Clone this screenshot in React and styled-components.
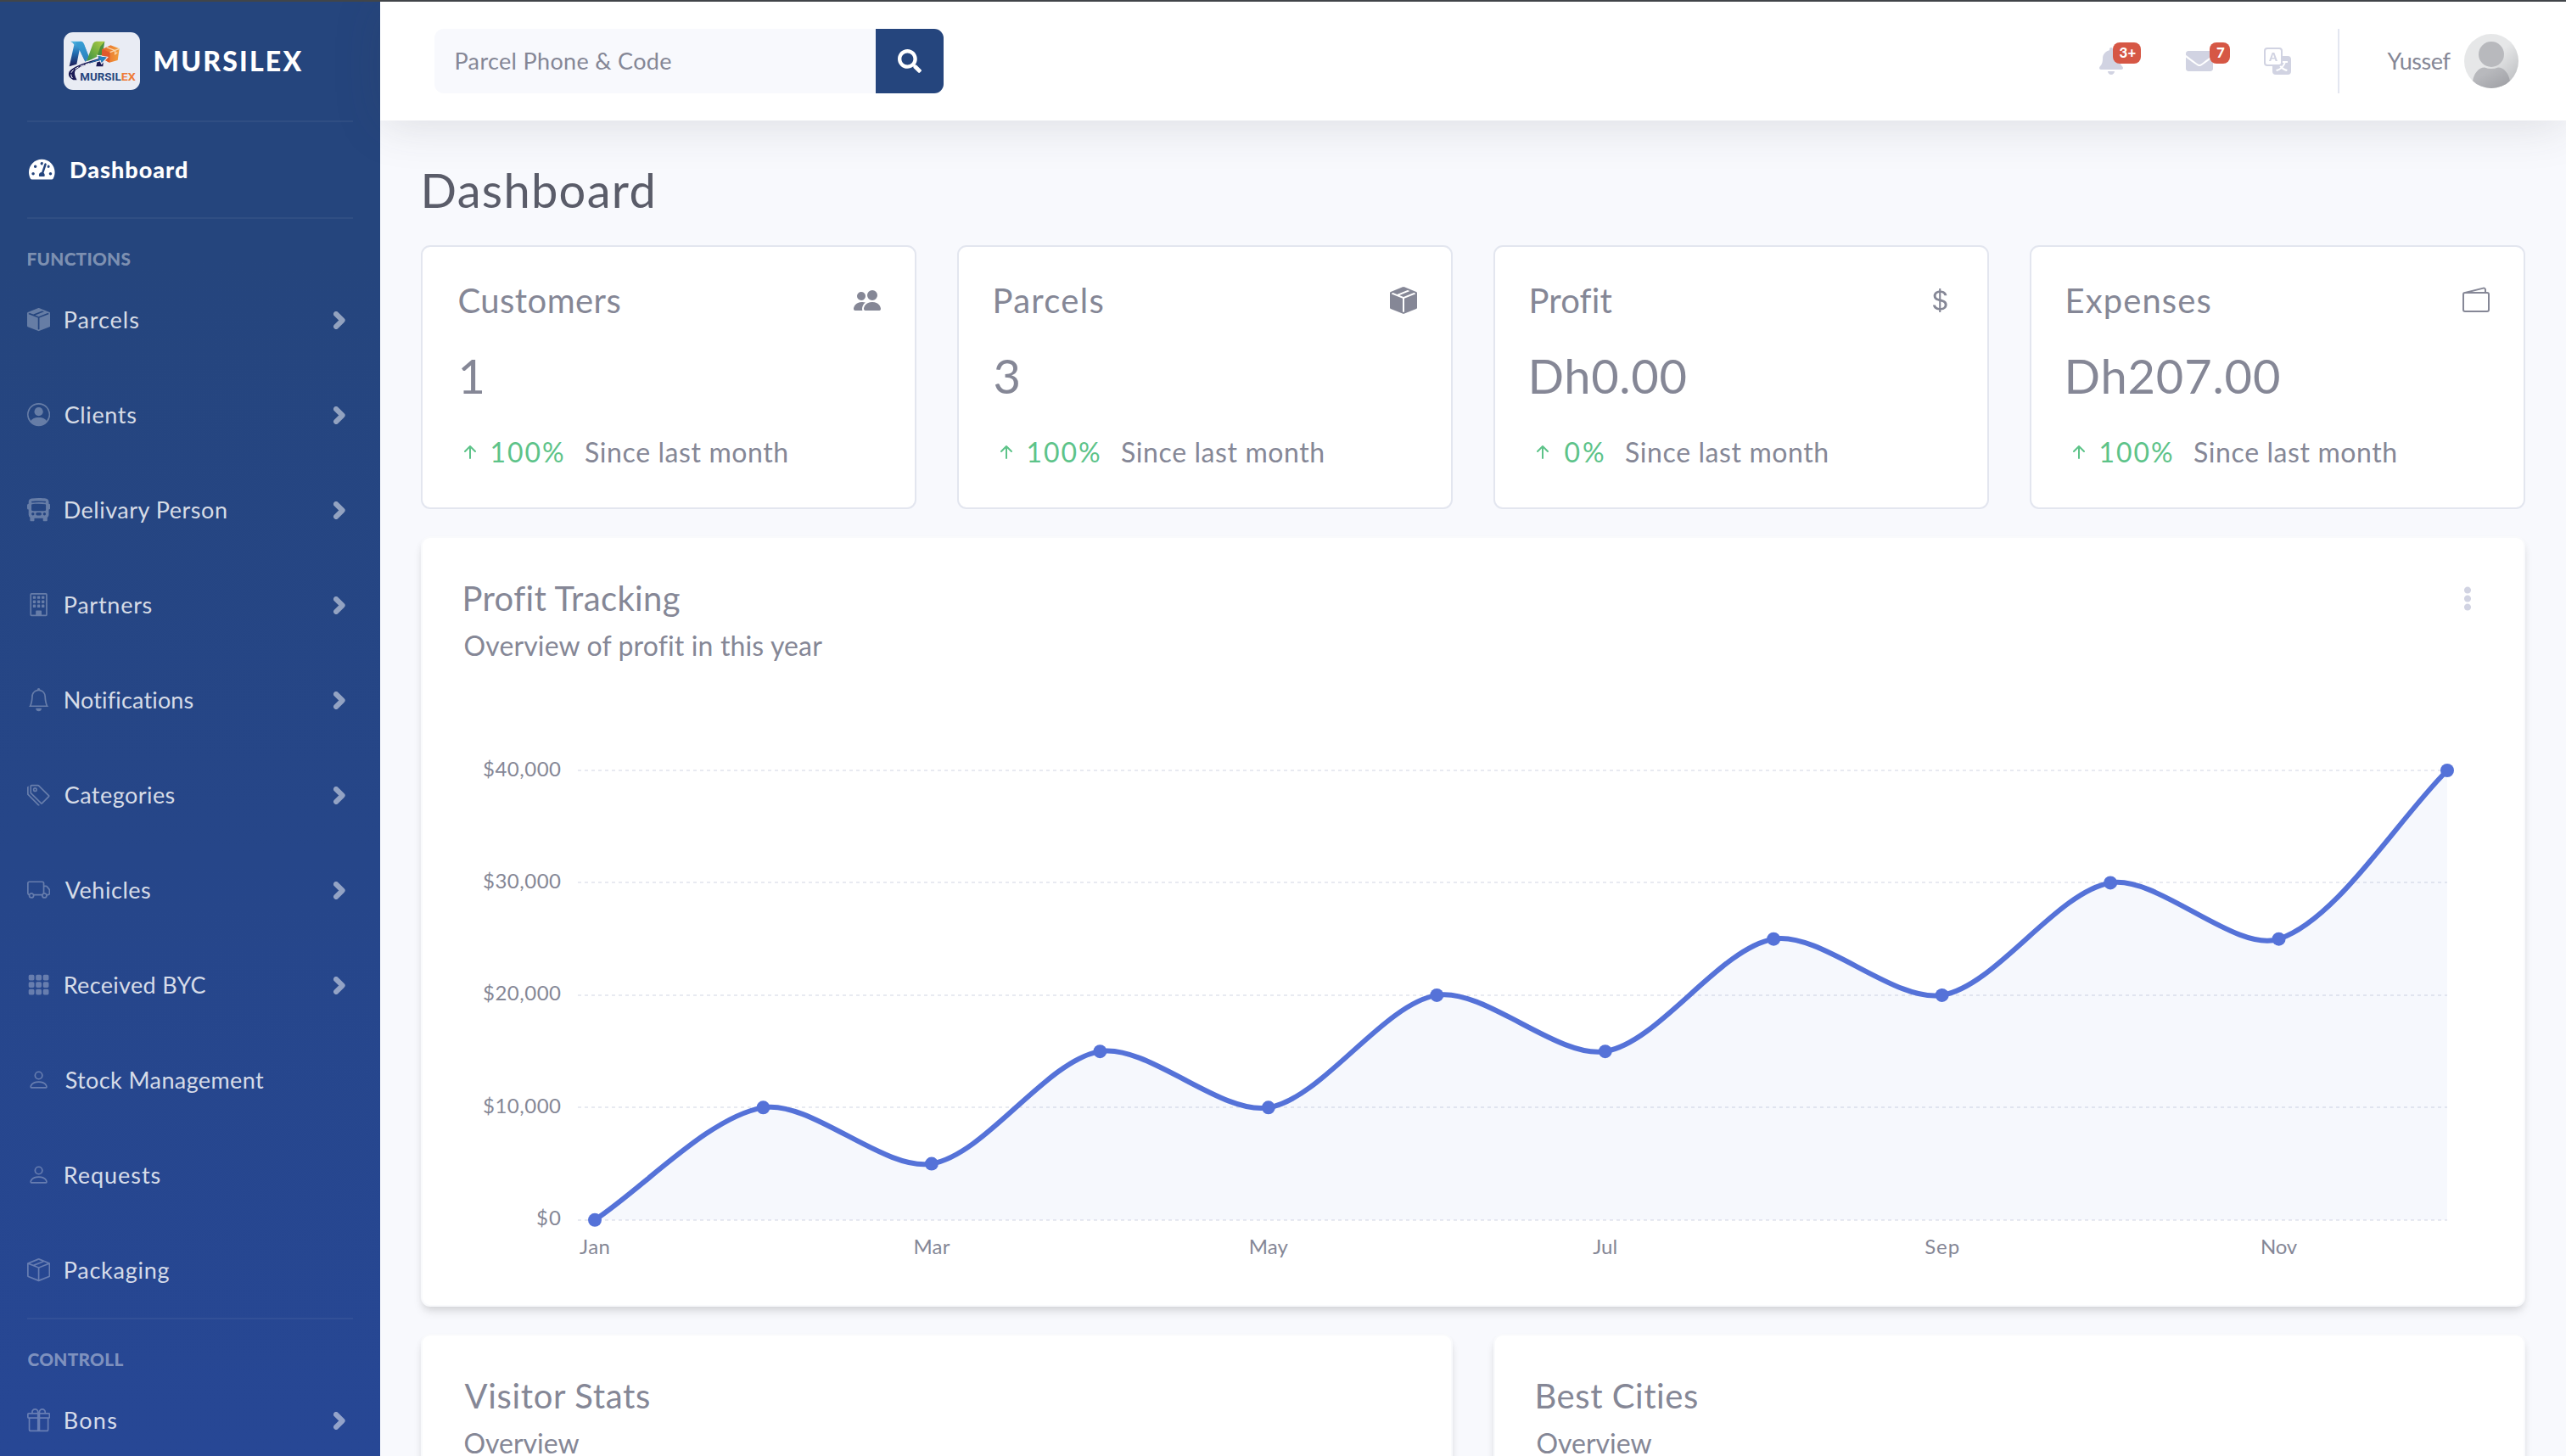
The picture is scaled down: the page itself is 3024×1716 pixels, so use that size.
import React, { useLayoutEffect, useRef, useState } from 'react';
import styled, { createGlobalStyle } from 'styled-components';
import { FaTachometerAlt, FaSearch, FaBell, FaEnvelope, FaEllipsisV } from 'react-icons/fa';
import {
  BsBoxSeamFill, BsPersonCircle, BsBusFrontFill, BsBuilding, BsBell, BsTags, BsTruck,
  BsGrid3X3GapFill, BsPerson, BsBoxSeam, BsGift, BsPeopleFill, BsCurrencyDollar,
  BsWallet2, BsArrowUpShort, BsTranslate,
} from 'react-icons/bs';

const GlobalStyle = createGlobalStyle`
  *, *::before, *::after { box-sizing: border-box; }
  body {
    margin: 0;
    background: #f8f9fd;
    color: #858796;
    font-family: Lato, 'Open Sans', sans-serif;
    overflow: hidden;
  }
`;

/* ---------- text ---------- */

const LabelBox = styled.span`
  display: inline-block;
  flex: none;
  white-space: nowrap;
  padding-top: 0.02em;
  line-height: 1.2;
  font-size: ${(p) => p.$size}px;
  font-weight: ${(p) => p.$weight || 400};
  color: ${(p) => p.$color || 'inherit'};
`;

/* A one-line label whose letters are tracked so that they span `span` pixels. */
function Label({ children, span, size, weight, color }) {
  const ref = useRef(null);
  const [fit, setFit] = useState(null);
  useLayoutEffect(() => {
    const cs = getComputedStyle(ref.current);
    const ctx = document.createElement('canvas').getContext('2d');
    ctx.font = `${cs.fontWeight} ${cs.fontSize} ${cs.fontFamily}`;
    ctx.letterSpacing = '0.01px';
    const m = ctx.measureText(children);
    const drawn = m.actualBoundingBoxLeft + m.actualBoundingBoxRight;
    const gaps = Math.max(children.length - 1, 1);
    setFit({
      letterSpacing: children.length > 1 ? `${(span - drawn) / gaps}px` : '0px',
      textIndent: `${m.actualBoundingBoxLeft + 0.5}px`,
      width: `${span}px`,
    });
  }, [children, span, size, weight]);
  return (
    <LabelBox ref={ref} $size={size} $weight={weight} $color={color} style={fit || undefined}>
      {children}
    </LabelBox>
  );
}

/* ---------- frame ---------- */

const Page = styled.div`
  width: 3024px;
  height: 1716px;
  overflow: hidden;
  display: flex;
  border-top: 2px solid #414549;
`;

const Sidebar = styled.nav`
  flex: none;
  width: 448px;
  background: linear-gradient(180deg, #25457d 0, #25457d 300px, #274795 1714px);
`;

const Brand = styled.div`
  height: 140px;
  padding-left: 75px;
  display: flex;
  align-items: center;
  gap: 17px;
`;

const LogoTile = styled.div`
  width: 90px;
  height: 68px;
  border-radius: 11px;
  background: #e9ecf4;
  overflow: hidden;
`;

const Rule = styled.hr`
  height: 2px;
  border: 0;
  margin: 0 32px ${(p) => p.$after || 0}px;
  background: rgba(255, 255, 255, 0.05);
`;

const Heading = styled.div`
  height: 31px;
  padding-left: 32px;
  display: flex;
  align-items: center;
`;

const NavItem = styled.a`
  height: 112px;
  padding: 0 41px 0 32px;
  display: flex;
  align-items: center;
  color: rgba(255, 255, 255, ${(p) => (p.$active ? 1 : 0.82)});
`;

const NavIcon = styled.span`
  display: flex;
  flex: none;
  width: ${(p) => (p.$active ? 51.5 : 44.2)}px;
  padding-left: ${(p) => (p.$active ? 2 : 0)}px;
  color: ${(p) => (p.$active ? '#fff' : 'rgba(255,255,255,.3)')};
  svg {
    width: ${(p) => (p.$active ? 30.6 : 27.2)}px;
    height: 27.2px;
  }
`;

const ChevronBox = styled.span`
  margin-left: auto;
  display: flex;
  color: rgba(255, 255, 255, 0.5);
`;

const Content = styled.div`
  flex: 1;
  min-width: 0;
`;

/* ---------- top bar ---------- */

const Topbar = styled.header`
  height: 140px;
  background: #fff;
  padding: 0 56px 0 64px;
  display: flex;
  align-items: center;
  box-shadow: 0 4.8px 56px rgba(58, 59, 69, 0.15);
`;

const SearchForm = styled.form`
  display: flex;
  height: 76px;
  border-radius: 11px;
  overflow: hidden;
`;

const SearchField = styled.div`
  width: 520px;
  background: #f8f9fd;
  display: flex;
  align-items: center;
  padding-left: 25px;
`;

const SearchButton = styled.button`
  width: 80px;
  border: 0;
  padding: 0;
  background: #25457d;
  color: #fff;
  display: flex;
  align-items: center;
  justify-content: center;
`;

const Tools = styled.div`
  margin-left: auto;
  display: flex;
  align-items: center;
  color: #d1d3e2;
`;

const Tool = styled.div`
  position: relative;
  display: flex;
  width: ${(p) => p.$w}px;
  margin-right: ${(p) => p.$after}px;
  svg {
    width: ${(p) => p.$w}px;
    height: 32px;
  }
`;

const Badge = styled.span`
  position: absolute;
  left: ${(p) => p.$left}px;
  top: -6px;
  width: ${(p) => p.$w}px;
  height: 25px;
  padding-bottom: 1px;
  border-radius: 8px;
  background: #d65745;
  display: flex;
  align-items: center;
  justify-content: center;
`;

const Separator = styled.div`
  width: 2px;
  height: 76px;
  background: #e3e6f0;
  margin-right: 56px;
`;

const AvatarBox = styled.div`
  width: 64px;
  height: 64px;
  margin-left: 16px;
  border-radius: 50%;
  overflow: hidden;
`;

/* ---------- main ---------- */

const Main = styled.main`
  padding: 48px 48px 0;
  display: flex;
  flex-direction: column;
`;

const PageTitle = styled.div`
  height: 67px;
  margin-bottom: 32px;
  padding-left: 4px;
  display: flex;
  align-items: center;
`;

const Stats = styled.section`
  display: grid;
  grid-template-columns: repeat(4, 1fr);
  gap: 48px;
  margin-bottom: 32px;
`;

const StatCard = styled.article`
  height: 311px;
  border: 2px solid #e3e6ef;
  border-radius: 11px;
  background: #fff;
  padding: 30px 40px 0 42px;
`;

const StatRow = styled.div`
  height: ${(p) => p.$h}px;
  padding-left: ${(p) => p.$indent || 0}px;
  display: flex;
  align-items: center;
  > svg {
    margin-left: auto;
    width: 32px;
    height: 32px;
  }
`;

const Trend = styled.div`
  height: 67px;
  display: flex;
  align-items: center;
  color: #5dc389;
  > svg {
    width: 32px;
    height: 32px;
    margin: 0 9px 0 -2px;
  }
  > span + span {
    margin-left: 26px;
  }
`;

const Panel = styled.section`
  height: ${(p) => p.$h}px;
  border: 2px solid #f9fafc;
  background-color: #fff;
  border-radius: 11px;
  box-shadow: 0 8px 12px -2px rgba(0, 0, 0, 0.1), 0 4px 8px -2px rgba(0, 0, 0, 0.08);
  padding: 46px 50px 0 49px;
`;

const PanelTitle = styled.header`
  height: 49px;
  display: flex;
  align-items: center;
  justify-content: space-between;
`;

const Kebab = styled(FaEllipsisV)`
  width: 12px;
  height: 29px;
  margin: 2px 10px 0 0;
  color: #d1d3e2;
`;

const PanelSub = styled.div`
  height: 63px;
  display: flex;
  align-items: center;
`;

const ChartBox = styled.div`
  margin-top: 60px;
  svg { display: block; }
`;

const TwoUp = styled.div`
  margin-top: 32px;
  display: grid;
  grid-template-columns: 1fr 1fr;
  gap: 48px;
`;

/* ---------- drawings ---------- */

function Chevron() {
  return (
    <ChevronBox>
      <svg width="14" height="21" viewBox="0 0 14 21">
        <path d="M3 3L10.600 10.500 3 18" fill="none" stroke="currentColor" strokeWidth="6" strokeLinecap="round" strokeLinejoin="round" />
      </svg>
    </ChevronBox>
  );
}

function Logo() {
  return (
    <svg width="90" height="68" viewBox="0 0 270 204">
      <defs>
        <linearGradient id="lb" x1="0" y1="0" x2="0" y2="1">
          <stop offset="0" stopColor="#4db5e2" />
          <stop offset=".45" stopColor="#2470b4" />
          <stop offset="1" stopColor="#1b1a55" />
        </linearGradient>
        <linearGradient id="lg" x1="1" y1="0" x2="0" y2="1">
          <stop offset="0" stopColor="#b4cd45" />
          <stop offset=".55" stopColor="#6cab3f" />
          <stop offset="1" stopColor="#2e8a4d" />
        </linearGradient>
        <linearGradient id="lo" x1="0" y1="0" x2="1" y2="0">
          <stop offset="0" stopColor="#e4602c" />
          <stop offset="1" stopColor="#f3a03a" />
        </linearGradient>
      </defs>
      <path d="M24 32H62Q69 33 72 42L89 86 77 106 56 62 46 113 20 121 37 44Q34 36 24 32Z" fill="url(#lb)" />
      <path d="M62 32Q69 33 72 42L89 86 77 106 56 62 42 36Z" fill="#3398d0" opacity=".75" />
      <path d="M104 40Q108 32 116 32H145L136 80Q108 88 79 108Z" fill="url(#lg)" />
      <path d="M130 50L145 33 137 80 118 86Z" fill="#36803c" opacity=".75" />
      <path d="M119 101L142 92 139 121H115Z" fill="#1b1a55" />
      <path d="M136 60L166 46 197 58 191 99 162 107 134 92Z" fill="url(#lo)" />
      <path d="M136 60L164 71 162 107 134 92Z" fill="#e0592c" />
      <path d="M164 71L197 58M152 53L182 65V77L190 71" fill="none" stroke="#f9d6ac" strokeWidth="4" />
      <path d="M34 171Q8 158 18 138Q34 116 122 92L119 82L155 88L134 111L130 101Q64 118 44 134Q36 146 50 171Z" fill="#1b1a55" stroke="#e9ecf4" strokeWidth="4" />
      <path d="M82 111Q104 101 126 95L123 85L152 89L134 107L131 98Q106 103 82 111Z" fill="#2684c1" />
      <path d="M31 162Q20 146 34 134Q52 120 94 109" fill="none" stroke="#fff" strokeWidth="3" strokeDasharray="14 6" />
      <text x="58" y="171" fontSize="36" fontWeight="700" fill="#25457d" fontFamily="Roboto, sans-serif" textLength="145" lengthAdjust="spacingAndGlyphs">MURSIL</text>
      <text x="203" y="171" fontSize="36" fontWeight="700" fill="#ee7b36" fontFamily="Roboto, sans-serif" textLength="51" lengthAdjust="spacingAndGlyphs">EX</text>
    </svg>
  );
}

function Avatar() {
  return (
    <svg width="64" height="64" viewBox="0 0 64 64">
      <defs>
        <linearGradient id="ab" x1="0" y1="0" x2="1" y2="1">
          <stop offset=".5" stopColor="#e6e7e8" />
          <stop offset="1" stopColor="#b5b7ba" />
        </linearGradient>
        <linearGradient id="af" x1="0" y1="0" x2="1" y2="1">
          <stop offset=".3" stopColor="#b8b9bd" />
          <stop offset="1" stopColor="#9d9ea3" />
        </linearGradient>
      </defs>
      <rect width="64" height="64" fill="url(#ab)" />
      <circle cx="32" cy="24" r="15" fill="#b8b9bd" />
      <path d="M10 56C11 47 17 39.500 24 39.500Q32 42.500 40 39.500C47 39.500 53 47 54 56L48 64H16Z" fill="url(#af)" />
    </svg>
  );
}

const MONTHS = ['Jan', 'Feb', 'Mar', 'Apr', 'May', 'Jun', 'Jul', 'Aug', 'Sep', 'Oct', 'Nov', 'Dec'];
const MONTH_SPAN = { Jan: 36, Mar: 43, May: 46, Jul: 29, Sep: 41, Nov: 43 };
const PROFIT = [0, 10000, 5000, 15000, 10000, 20000, 15000, 25000, 20000, 30000, 25000, 40000];
const TICKS = [0, 10000, 20000, 30000, 40000];

const X0 = 154;
const X1 = 2337;
const Y0 = 585.8;
const Y1 = 56;
const px = (i) => X0 + ((X1 - X0) * i) / 11;
const py = (v) => Y0 - ((Y0 - Y1) * v) / 40000;

/* Smooth curve through the points, with a tension of 0.3. */
function curve(pts) {
  const clamp = (y) => Math.min(Math.max(y, Y1), Y0);
  const ctl = pts.map((p, i) => {
    const a = pts[i - 1] || p;
    const b = pts[i + 1] || p;
    const da = Math.hypot(p[0] - a[0], p[1] - a[1]);
    const db = Math.hypot(b[0] - p[0], b[1] - p[1]);
    const ka = (0.3 * da) / (da + db);
    const kb = (0.3 * db) / (da + db);
    const dx = b[0] - a[0];
    const dy = b[1] - a[1];
    return {
      before: [p[0] - ka * dx, clamp(p[1] - ka * dy)],
      after: [Math.min(p[0] + kb * dx, X1), clamp(p[1] + kb * dy)],
    };
  });
  return pts.slice(1).reduce(
    (d, p, i) => `${d}C${ctl[i].after} ${ctl[i + 1].before} ${p}`,
    `M${pts[0]}`,
  );
}

function ProfitChart() {
  const pts = PROFIT.map((v, i) => [px(i), py(v)]);
  const line = curve(pts);
  return (
    <svg width="2379" height="660" viewBox="0 0 2379 660" fontFamily="Lato, sans-serif" fontSize="24" fill="#858796">
      {TICKS.map((v) => (
        <g key={v}>
          <line x1="134" x2={X1} y1={Math.round(py(v))} y2={Math.round(py(v))} stroke="#e8eaf1" strokeWidth="2" strokeDasharray="4 4" />
          <text x="114" y={py(v) + 6.500} textAnchor="end" textLength={v ? 92 : 29}>{`$${v.toLocaleString('en-US')}`}</text>
        </g>
      ))}
      {MONTHS.map((m, i) => (i % 2 ? null : (
        <text key={m} x={px(i)} y="626" textAnchor="middle" textLength={MONTH_SPAN[m]}>{m}</text>
      )))}
      <path d={`${line}V${Y0}H${X0}Z`} fill="rgba(78,115,223,.05)" />
      <path d={line} fill="none" stroke="#5572d8" strokeWidth="6" strokeLinejoin="round" />
      {pts.map(([x, y]) => <circle key={x} cx={x} cy={y} r="8" fill="#5572d8" />)}
    </svg>
  );
}

/* ---------- data ---------- */

const FUNCTIONS = [
  { name: 'Parcels', span: 86.5, Icon: BsBoxSeamFill, more: true },
  { name: 'Clients', span: 83.5, Icon: BsPersonCircle, more: true },
  { name: 'Delivary Person', span: 191, Icon: BsBusFrontFill, more: true },
  { name: 'Partners', span: 102, Icon: BsBuilding, more: true },
  { name: 'Notifications', span: 151, Icon: BsBell, more: true },
  { name: 'Categories', span: 129, Icon: BsTags, more: true },
  { name: 'Vehicles', span: 100.5, Icon: BsTruck, more: true },
  { name: 'Received BYC', span: 166, Icon: BsGrid3X3GapFill, more: true },
  { name: 'Stock Management', span: 234.5, Icon: BsPerson },
  { name: 'Requests', span: 112, Icon: BsPerson },
  { name: 'Packaging', span: 123, Icon: BsBoxSeam },
];

const CONTROL = [{ name: 'Bons', span: 60.5, Icon: BsGift, more: true }];

const STATS = [
  { title: 'Customers', span: 190, Icon: BsPeopleFill, value: '1', valueSpan: 24, indent: 3, rate: '100%', rateSpan: 84.5 },
  { title: 'Parcels', span: 127, Icon: BsBoxSeamFill, value: '3', valueSpan: 28, rate: '100%', rateSpan: 84.5 },
  { title: 'Profit', span: 95, Icon: BsCurrencyDollar, value: 'Dh0.00', valueSpan: 181, indent: 1, rate: '0%', rateSpan: 46.5 },
  { title: 'Expenses', span: 168, Icon: BsWallet2, value: 'Dh207.00', valueSpan: 248.5, indent: 1, rate: '100%', rateSpan: 84.5 },
];

/* ---------- parts ---------- */

function NavList({ items }) {
  return items.map(({ name, span, Icon, more }) => (
    <NavItem key={name}>
      <NavIcon><Icon /></NavIcon>
      <Label size={27} span={span}>{name}</Label>
      {more && <Chevron />}
    </NavItem>
  ));
}

function Stat({ title, span, Icon, value, valueSpan, indent, rate, rateSpan }) {
  return (
    <StatCard>
      <StatRow $h={65}>
        <Label size={40} span={span}>{title}</Label>
        <Icon />
      </StatRow>
      <StatRow $h={113} $indent={indent}>
        <Label size={56} span={valueSpan}>{value}</Label>
      </StatRow>
      <Trend>
        <BsArrowUpShort />
        <Label size={32} span={rateSpan}>{rate}</Label>
        <Label size={32} span={237.5} color="#858796">Since last month</Label>
      </Trend>
    </StatCard>
  );
}

export default function App() {
  return (
    <>
      <GlobalStyle />
      <Page>
        <Sidebar>
          <Brand>
            <LogoTile><Logo /></LogoTile>
            <Label size={32} span={173} weight={900} color="#fff">MURSILEX</Label>
          </Brand>
          <Rule />
          <NavItem $active>
            <NavIcon $active><FaTachometerAlt /></NavIcon>
            <Label size={27} span={136} weight={900}>Dashboard</Label>
          </NavItem>
          <Rule $after={32} />
          <Heading><Label size={20.8} span={121} weight={900} color="rgba(255,255,255,.42)">FUNCTIONS</Label></Heading>
          <NavList items={FUNCTIONS} />
          <Rule $after={32} />
          <Heading><Label size={20.8} span={113} weight={900} color="rgba(255,255,255,.42)">CONTROLL</Label></Heading>
          <NavList items={CONTROL} />
        </Sidebar>

        <Content>
          <Topbar>
            <SearchForm>
              <SearchField><Label size={27} span={254}>Parcel Phone &amp; Code</Label></SearchField>
              <SearchButton type="button"><FaSearch size={28} /></SearchButton>
            </SearchForm>
            <Tools>
              <Tool $w={28} $after={74}>
                <FaBell />
                <Badge $left={16} $w={33}><Label size={16.8} span={19} weight={900} color="#fff">3+</Label></Badge>
              </Tool>
              <Tool $w={32} $after={60}>
                <FaEnvelope />
                <Badge $left={28} $w={24}><Label size={16.8} span={9} weight={900} color="#fff">7</Label></Badge>
              </Tool>
              <Tool $w={32} $after={55}><BsTranslate /></Tool>
              <Separator />
              <Label size={27} span={75} color="#858796">Yussef</Label>
              <AvatarBox><Avatar /></AvatarBox>
            </Tools>
          </Topbar>

          <Main>
            <PageTitle><Label size={56} span={269} color="#5a5c69">Dashboard</Label></PageTitle>
            <Stats>{STATS.map((s) => <Stat key={s.title} {...s} />)}</Stats>
            <Panel $h={908}>
              <PanelTitle>
                <Label size={40} span={254.5}>Profit Tracking</Label>
                <Kebab />
              </PanelTitle>
              <PanelSub><Label size={32} span={424}>Overview of profit in this year</Label></PanelSub>
              <ChartBox><ProfitChart /></ChartBox>
            </Panel>
            <TwoUp>
              <Panel $h={400}>
                <PanelTitle><Label size={40} span={218.5}>Visitor Stats</Label></PanelTitle>
                <PanelSub><Label size={32} span={135}>Overview</Label></PanelSub>
              </Panel>
              <Panel $h={400}>
                <PanelTitle><Label size={40} span={188.5}>Best Cities</Label></PanelTitle>
                <PanelSub><Label size={32} span={135}>Overview</Label></PanelSub>
              </Panel>
            </TwoUp>
          </Main>
        </Content>
      </Page>
    </>
  );
}
